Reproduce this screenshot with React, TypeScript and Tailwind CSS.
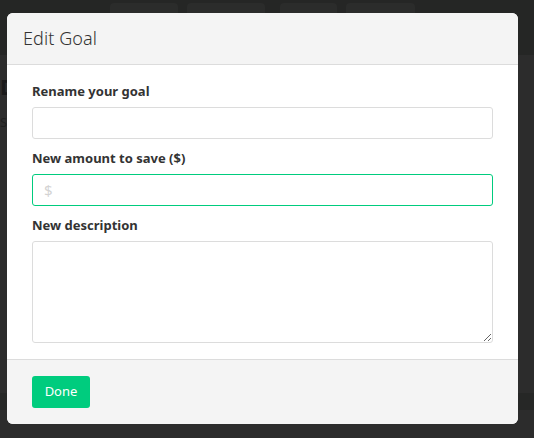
import React from "react";

export default function App() {
  const font = { fontFamily: '"Noto Sans", "Open Sans", sans-serif' };
  return (
    <div className="relative w-[534px] h-[438px] overflow-hidden bg-[#2c2c2c]" style={font}>
      {/* background page (dimmed) */}
      <div className="flex flex-col h-full">
        <div className="h-[55px] bg-[#252625] flex items-start gap-[9px] pl-[110px] pt-[3px]">
          <div className="w-[68px] h-[30px] bg-[#2b2c2b] rounded-sm" />
          <div className="w-[78px] h-[30px] bg-[#2b2c2b] rounded-sm" />
          <div className="w-[57px] h-[30px] bg-[#2b2c2b] rounded-sm ml-[6px]" />
          <div className="w-[69px] h-[30px] bg-[#2b2c2b] rounded-sm" />
        </div>
        <div className="flex-1 flex flex-col pl-0 pt-[18px]">
          <div className="text-[22px] font-bold text-[#1a1a1a] leading-[26px]">Do</div>
          <div className="text-[13px] text-[#1f1f1f] mt-[14px]">Save</div>
        </div>
        <div className="h-[17px] bg-[#262726] mb-[28px]" />
      </div>

      {/* modal */}
      <div className="absolute left-[7px] top-[13px] w-[511px] h-[411px] rounded-[6px] overflow-hidden flex flex-col bg-white">
        <div className="h-[52px] bg-[#f4f4f4] border-b border-[#dcdcdc] flex items-center pl-[16px]">
          <span className="text-[18px] font-light text-[#333] tracking-[0.1px]">Edit Goal</span>
        </div>
        <div className="flex-1 flex flex-col px-[25px] pt-[17px]">
          <label className="text-[13px] font-bold text-[#333] leading-[18px]">Rename your goal</label>
          <input className="mt-[7px] h-[32px] w-[461px] border border-[#dcdcdc] rounded-[3px] outline-none" />
          <label className="mt-[10px] text-[13px] font-bold text-[#333] leading-[18px]">New amount to save ($)</label>
          <div className="mt-[7px] h-[32px] w-[461px] border border-[#00cc7e] rounded-[3px] flex items-center pl-[11px]">
            <span className="text-[15px] text-[#d3d3d3]">$</span>
          </div>
          <label className="mt-[10px] text-[13px] font-bold text-[#333] leading-[18px]">New description</label>
          <textarea className="mt-[7px] h-[102px] w-[461px] border border-[#dcdcdc] rounded-[3px] outline-none resize-y" />
        </div>
        <div className="h-[65px] bg-[#f4f4f4] border-t border-[#dcdcdc] flex items-start pl-[25px] pt-[16px]">
          <button className="h-[32px] w-[58px] bg-[#00cc7e] rounded-[3px] text-white text-[13px]">Done</button>
        </div>
      </div>
    </div>
  );
}
